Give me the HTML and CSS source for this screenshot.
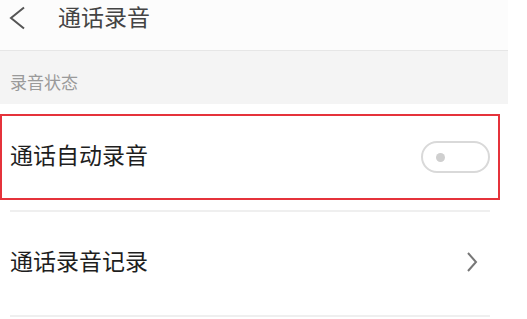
FILE: index.html
```html
<!DOCTYPE html>
<html>
<head>
    <meta charset="utf-8">
    <title>通话录音</title>
    <link rel="stylesheet" href="styles.css">
</head>
<body>
    <div class="page">
        <div class="topbar">
            <svg class="back" width="18" height="24" viewBox="0 0 18 24">
                <polyline points="16,1.5 3,12 16,22.5" fill="none" stroke="#555" stroke-width="2"/>
            </svg>
            <span class="title">通话录音</span>
        </div>

        <div class="section-head">录音状态</div>

        <div class="row row-first">
            <span class="row-label">通话自动录音</span>
            <span class="switch"><span class="knob"></span></span>
            <div class="mark"></div>
        </div>
        <div class="divider"></div>

        <div class="row row-second">
            <span class="row-label">通话录音记录</span>
            <svg class="arrow" width="12" height="20" viewBox="0 0 12 20">
                <polyline points="2,1 10,10 2,19" fill="none" stroke="#777" stroke-width="2"/>
            </svg>
        </div>
        <div class="divider"></div>
    </div>
</body>
</html>
```

FILE: styles.css
```css
body {
    margin: 0;
    background: #fff;
    font-family: "Noto Sans CJK SC", "Noto Sans", sans-serif;
    color: #222;
}

.page {
    width: 508px;
}

.topbar {
    height: 51px;
    background: #fcfcfc;
    border-bottom: 1px solid #e6e6e6;
    display: flex;
    align-items: flex-start;
    padding-top: 3px;
    box-sizing: border-box;
}

.back {
    margin-left: 8px;
    margin-top: 3px;
}

.title {
    margin-left: 32px;
    font-size: 23px;
    line-height: 26px;
    color: #444;
}

.section-head {
    height: 53px;
    background: #f4f4f4;
    font-size: 17px;
    color: #9a9a9a;
    padding: 19px 0 0 10px;
    box-sizing: border-box;
    line-height: 24px;
}

.row {
    position: relative;
    display: flex;
    align-items: center;
    justify-content: space-between;
    padding: 0 18px 0 10px;
    box-sizing: border-box;
}

.row-first {
    height: 106px;
}

.row-first .row-label {
    margin-bottom: 6px;
}

.row-second {
    height: 103px;
    padding-right: 30px;
}

.row-second .row-label {
    margin-bottom: 8px;
}

.row-second .arrow {
    margin-bottom: 4px;
}

.row-label {
    font-size: 23px;
    color: #1e1e1e;
}

.switch {
    width: 69px;
    height: 32px;
    border: 2px solid #d9d9d9;
    border-radius: 18px;
    box-sizing: border-box;
    display: flex;
    align-items: center;
    padding-left: 13px;
}

.knob {
    width: 9px;
    height: 9px;
    border-radius: 50%;
    background: #cfcfcf;
}

.divider {
    height: 2px;
    background: #efefef;
    margin: 0 18px 0 10px;
}

/* red highlight drawn on top of the first row */
.mark {
    position: absolute;
    left: 0;
    top: 10px;
    width: 500px;
    height: 86px;
    border: 2.5px solid #e5333b;
    box-sizing: border-box;
}
```
